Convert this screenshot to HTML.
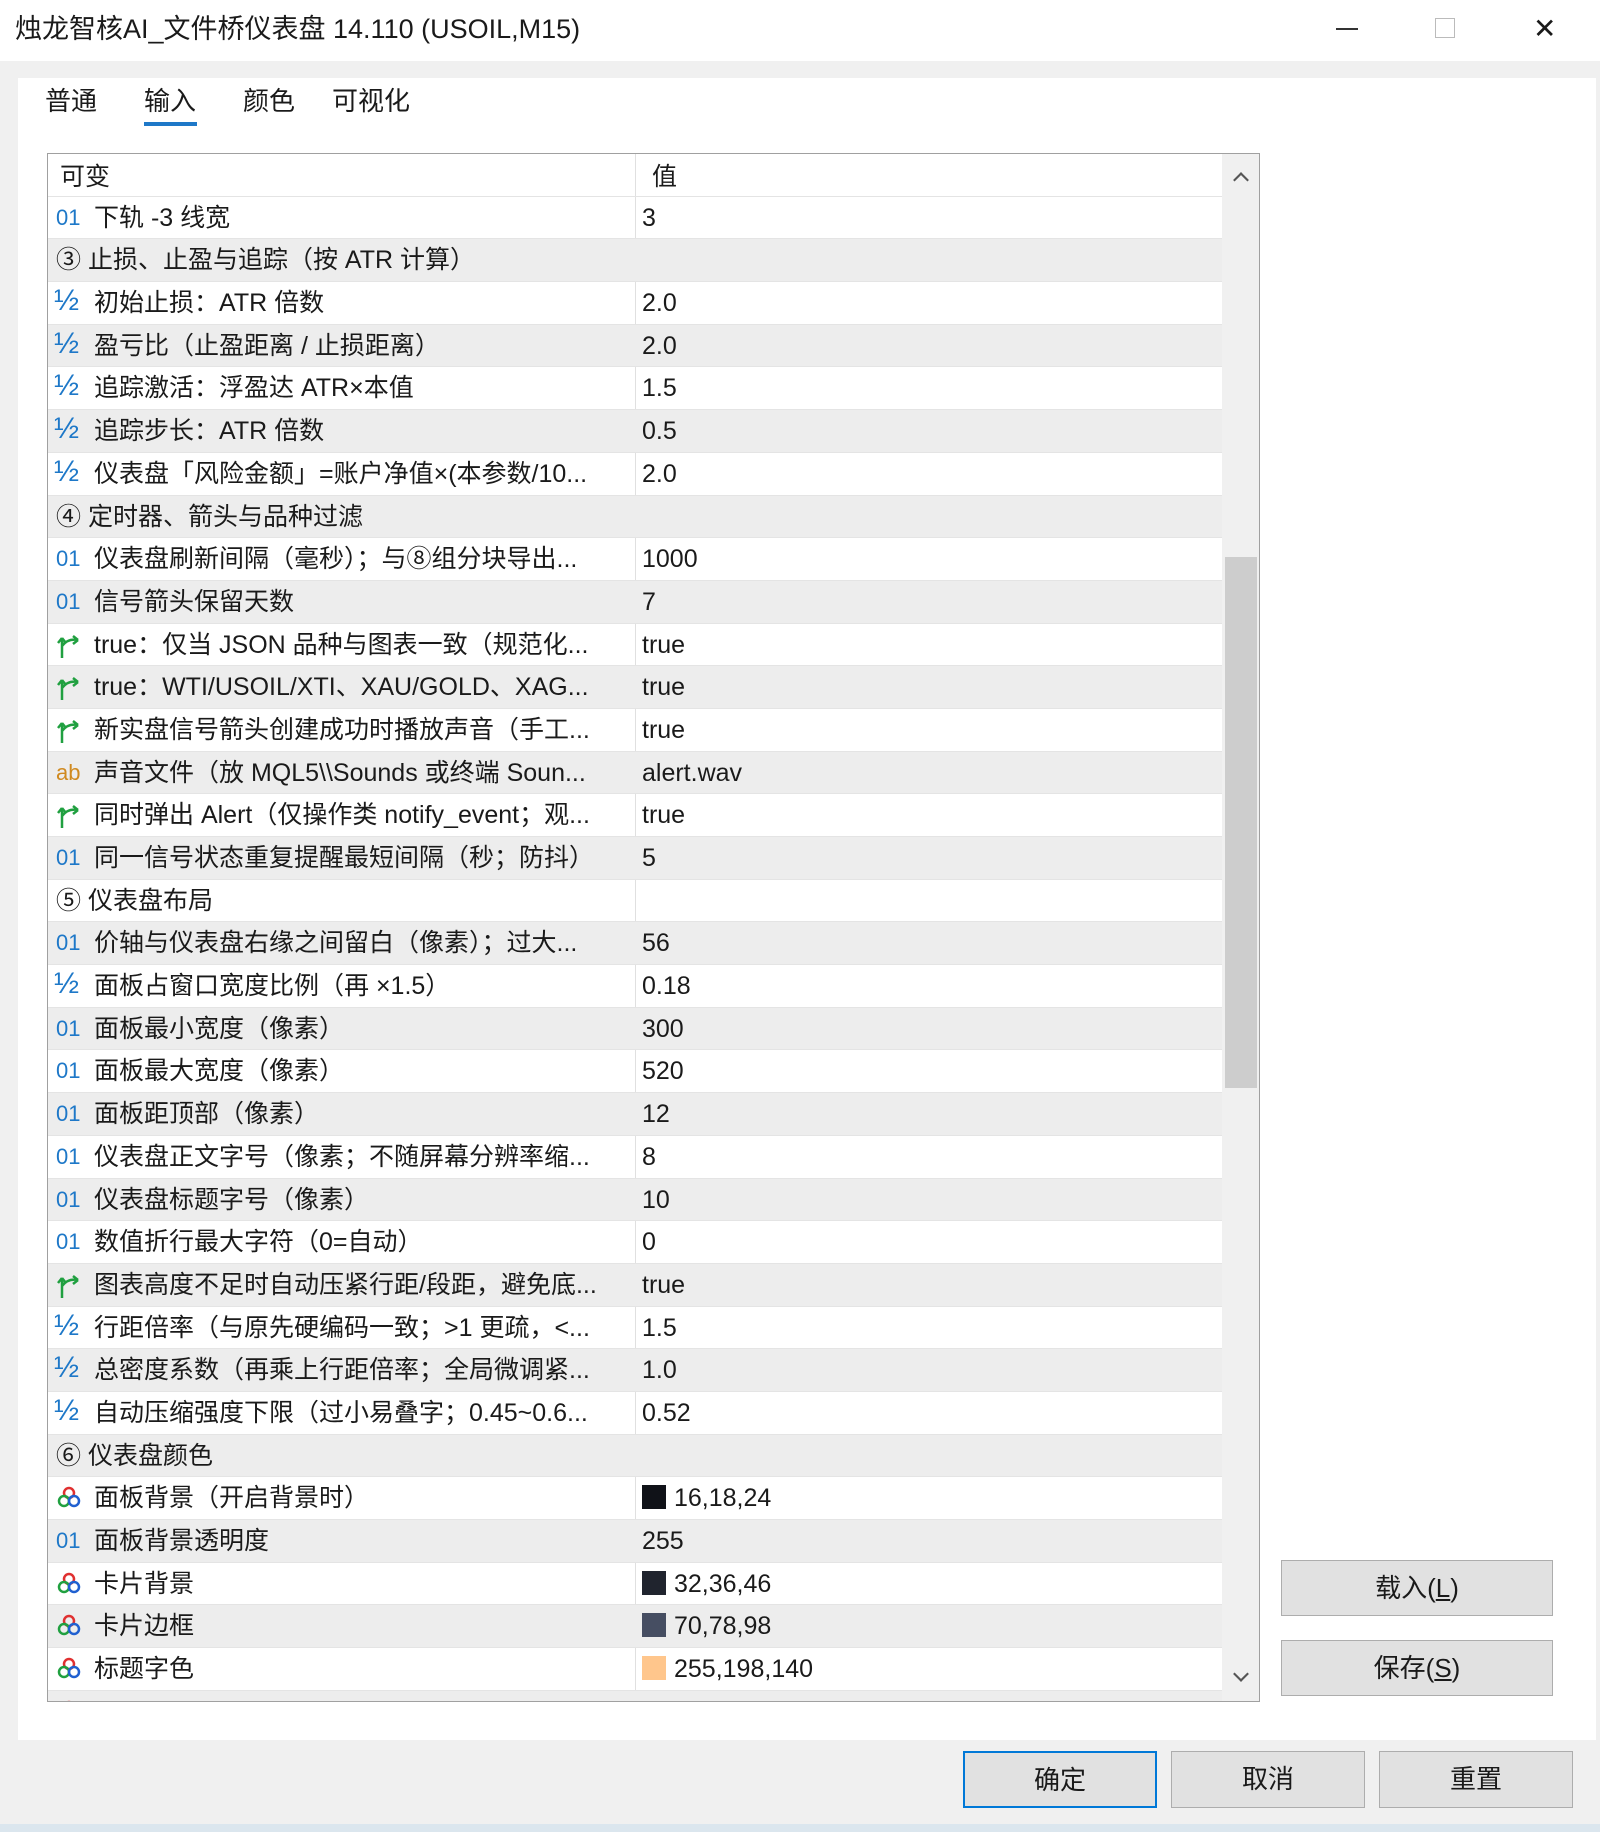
<!DOCTYPE html>
<html><head><meta charset="utf-8"><style>
*{margin:0;padding:0;box-sizing:border-box}
body{width:1600px;height:1832px;background:#f0f0f0;font-family:"Liberation Sans","Noto Sans CJK SC",sans-serif;color:#1a1a1a;position:relative;overflow:hidden}
.abs{position:absolute}
#title{left:0;top:0;width:1600px;height:61px;background:#fff;font-size:27px;line-height:58px;padding-left:15px}
#panel{left:18px;top:78px;width:1578px;height:1662px;background:#fff}
.tab{position:absolute;top:83px;font-size:26px;line-height:36px}
#table{left:47px;top:153px;width:1213px;height:1549px;border:1px solid #a0a0a0;background:#fff;overflow:hidden}
.row{position:absolute;left:0;width:1174px;height:42.7px;border-bottom:1px solid #e4e4e4;font-size:25px;line-height:42px;white-space:nowrap}
.row.g{background:#ededed}
.row .n{position:absolute;left:46px}
.row .v{position:absolute;left:594px}
.row .i{position:absolute;left:8px;top:0;width:30px;height:42px;font-size:22px;color:#1e78c8}
.row .i.h{font-size:30px;left:6px;top:-2px}
.div{position:absolute;left:587px;top:0;width:1px;height:1549px;background:#e0e0e0}
#sb{left:1174px;top:0;width:38px;height:1549px;background:#f0f0f0}
.btn{position:absolute;background:#e1e1e1;border:1px solid #adadad;font-size:26px;text-align:center}
.sw{display:inline-block;width:24px;height:24px;vertical-align:-3px;margin-right:8px}
</style></head><body>
<div id="title" class="abs">烛龙智核AI_文件桥仪表盘 14.110 (USOIL,M15)
<span class="abs" style="left:1336px;top:28px;width:22px;height:2px;background:#333"></span>
<span class="abs" style="left:1435px;top:18px;width:20px;height:20px;border:1.5px solid #bbb"></span>
<span class="abs" style="left:1533px;top:0;font-size:28px">✕</span></div>
<div id="panel" class="abs"></div>
<div class="tab" style="left:45px">普通</div>
<div class="tab" style="left:144px">输入</div>
<div class="abs" style="left:144px;top:122px;width:53px;height:4px;background:#1e78c8"></div>
<div class="tab" style="left:243px">颜色</div>
<div class="tab" style="left:332px">可视化</div>

<div id="table" class="abs">
<div class="div"></div>
<div id="rows"></div>
<div id="sb" class="abs">
<div class="abs" style="left:11px;top:18px;width:16px;height:16px;border-left:3px solid #555;border-top:3px solid #555;transform:rotate(45deg) scale(.7)"></div>
<div class="abs" style="left:3px;top:403px;width:32px;height:531px;background:#cdcdcd"></div>
<div class="abs" style="left:11px;top:1512px;width:16px;height:16px;border-right:3px solid #555;border-bottom:3px solid #555;transform:rotate(45deg) scale(.7)"></div>
</div>
</div>

<div class="btn" style="left:1281px;top:1560px;width:272px;height:56px;line-height:54px">载入(<u>L</u>)</div>
<div class="btn" style="left:1281px;top:1640px;width:272px;height:56px;line-height:54px">保存(<u>S</u>)</div>
<div class="btn" style="left:963px;top:1751px;width:194px;height:57px;line-height:55px;border:2px solid #0078d7">确定</div>
<div class="btn" style="left:1171px;top:1751px;width:194px;height:57px;line-height:55px">取消</div>
<div class="btn" style="left:1379px;top:1751px;width:194px;height:57px;line-height:55px">重置</div>
<div class="abs" style="left:0;top:1824px;width:1600px;height:8px;background:#dbe6ee"></div>

<script>
var B='<svg width="30" height="30" viewBox="0 0 30 30" style="margin-top:6px"><path d="M6 28 V8 M6 8 l-4 5 M6 8 l4 5 M6 16 Q12 8 22 10 M22 10 l-5 -4 M22 10 l-5 4" stroke="#20a040" stroke-width="2.5" fill="none"/></svg>';
var C='<svg width="26" height="26" viewBox="0 0 26 26" style="margin-top:8px"><circle cx="13" cy="8" r="5" fill="none" stroke="#e03030" stroke-width="2.5"/><circle cx="8" cy="16" r="5" fill="none" stroke="#20a040" stroke-width="2.5"/><circle cx="18" cy="16" r="5" fill="none" stroke="#2060d0" stroke-width="2.5"/></svg>';
var ic={o:'01',h:'½',b:B,c:C,a:'<span style="color:#d08a20">ab</span>'};
var R=[['h0','可变','值'],
['o','下轨 -3 线宽','3'],['s','③ 止损、止盈与追踪（按 ATR 计算）',''],
['h','初始止损：ATR 倍数','2.0'],['h','盈亏比（止盈距离 / 止损距离）','2.0'],['h','追踪激活：浮盈达 ATR×本值','1.5'],['h','追踪步长：ATR 倍数','0.5'],['h','仪表盘「风险金额」=账户净值×(本参数/10...','2.0'],
['s','④ 定时器、箭头与品种过滤',''],['o','仪表盘刷新间隔（毫秒）；与⑧组分块导出...','1000'],['o','信号箭头保留天数','7'],
['b','true：仅当 JSON 品种与图表一致（规范化...','true'],['b','true：WTI/USOIL/XTI、XAU/GOLD、XAG...','true'],['b','新实盘信号箭头创建成功时播放声音（手工...','true'],
['a','声音文件（放 MQL5\\\\Sounds 或终端 Soun...','alert.wav'],['b','同时弹出 Alert（仅操作类 notify_event；观...','true'],['o','同一信号状态重复提醒最短间隔（秒；防抖）','5'],
['s','⑤ 仪表盘布局',''],['o','价轴与仪表盘右缘之间留白（像素）；过大...','56'],['h','面板占窗口宽度比例（再 ×1.5）','0.18'],['o','面板最小宽度（像素）','300'],['o','面板最大宽度（像素）','520'],['o','面板距顶部（像素）','12'],['o','仪表盘正文字号（像素；不随屏幕分辨率缩...','8'],['o','仪表盘标题字号（像素）','10'],['o','数值折行最大字符（0=自动）','0'],
['b','图表高度不足时自动压紧行距/段距，避免底...','true'],['h','行距倍率（与原先硬编码一致；>1 更疏，<...','1.5'],['h','总密度系数（再乘上行距倍率；全局微调紧...','1.0'],['h','自动压缩强度下限（过小易叠字；0.45~0.6...','0.52'],
['s','⑥ 仪表盘颜色',''],['c','面板背景（开启背景时）','<span class="sw" style="background:#101218"></span>16,18,24'],['o','面板背景透明度','255'],['c','卡片背景','<span class="sw" style="background:#20242e"></span>32,36,46'],['c','卡片边框','<span class="sw" style="background:#464e62"></span>70,78,98'],['c','标题字色','<span class="sw" style="background:#ffc68c"></span>255,198,140'],['c','','']];
var h='';
R.forEach(function(r,i){
 var top=(i*42.69).toFixed(2);
 var g=(i%2==0&&i>0)?' g':'';
 if(r[0]=='h0') h+='<div class="row" style="top:0;line-height:46px"><span class="n" style="left:12px">'+r[1]+'</span><span class="v" style="left:604px">'+r[2]+'</span></div>';
 else if(r[0]=='s') h+='<div class="row'+g+'" style="top:'+top+'px"><span class="n" style="left:8px">'+r[1]+'</span></div>';
 else h+='<div class="row'+g+'" style="top:'+top+'px"><span class="i'+(r[0]=='h'?' h':'')+'">'+ic[r[0]]+'</span><span class="n">'+r[1]+'</span><span class="v">'+r[2]+'</span></div>';
});
document.getElementById('rows').innerHTML=h;
</script>
</body></html>
